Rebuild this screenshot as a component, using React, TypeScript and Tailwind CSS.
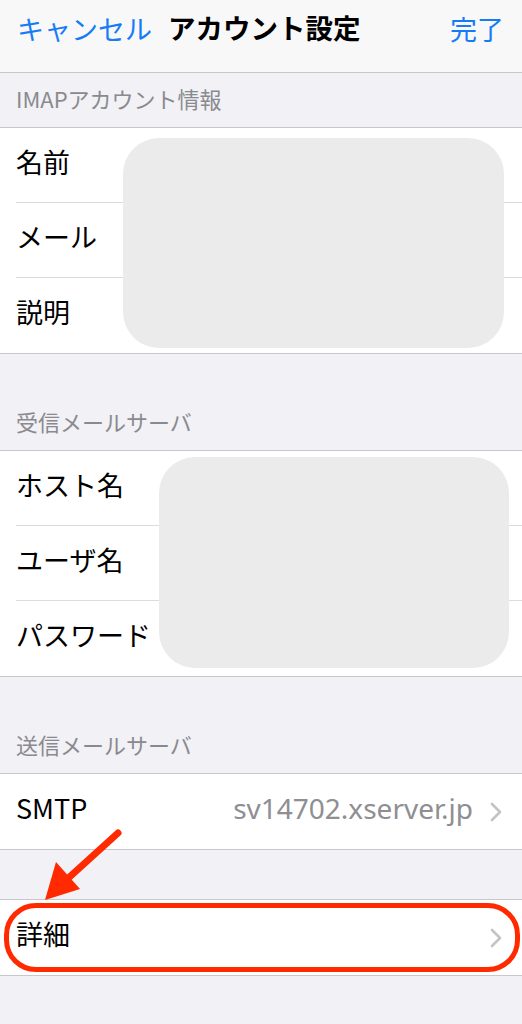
import React from "react";

const font = { fontFamily: '"Noto Sans CJK JP", "Noto Sans", sans-serif' };

function Chevron() {
  return (
    <svg width="12" height="20" viewBox="0 0 12 20" className="shrink-0">
      <polyline points="2,2 10,10 2,18" fill="none" stroke="#c4c4c8" strokeWidth="2.6" strokeLinecap="round" strokeLinejoin="round" />
    </svg>
  );
}

function Row({ label, last, children }: { label: string; last?: boolean; children?: React.ReactNode }) {
  return (
    <div className="h-[75px] pl-4 flex">
      <div className={"flex-1 flex items-center pr-5 " + (last ? "" : "border-b border-[#dcdcde]")}>
        <span className="text-[27px] text-black leading-none mb-[8px]">{label}</span>
        <div className="flex-1" />
        {children}
      </div>
    </div>
  );
}

function Header({ text, tall }: { text: string; tall?: boolean }) {
  return (
    <div className={(tall ? "h-[96px]" : "h-[54px]") + " flex items-end pb-[14px] px-4"}>
      <span className="text-[22px] leading-[30px] text-[#8a8a8e]">{text}</span>
    </div>
  );
}

export default function App() {
  return (
    <div className="relative w-[522px] min-h-[1024px] bg-[#f1f1f6] overflow-hidden" style={font}>
      {/* Nav bar */}
      <div className="h-[73px] bg-[#f8f8f8] border-b border-[#c8c7cc] flex items-center px-[17px] pb-[16px]">
        <span className="text-[27px] text-[#167cf6] leading-none">キャンセル</span>
        <span className="ml-[16px] text-[27.5px] font-bold text-black leading-none">アカウント設定</span>
        <div className="flex-1" />
        <span className="text-[27px] text-[#167cf6] leading-none mr-[1px]">完了</span>
      </div>

      <Header text="IMAPアカウント情報" />
      <div className="relative bg-white border-y border-[#c8c7cc]">
        <Row label="名前" />
        <Row label="メール" />
        <Row label="説明" last />
        <div className="absolute left-[123px] top-[10px] w-[381px] h-[210px] rounded-[36px] bg-[#ebebeb]" />
      </div>

      <Header text="受信メールサーバ" tall />
      <div className="relative bg-white border-y border-[#c8c7cc]">
        <Row label="ホスト名" />
        <Row label="ユーザ名" />
        <Row label="パスワード" last />
        <div className="absolute left-[159px] top-[6px] w-[350px] h-[211px] rounded-[36px] bg-[#ebebeb]" />
      </div>

      <Header text="送信メールサーバ" tall />
      <div className="bg-white border-y border-[#c8c7cc]">
        <Row label="SMTP" last>
          <span className="text-[28px] text-[#8e8e93] leading-none mr-[17px] mb-[8px]" style={{ fontFamily: '"Noto Sans", sans-serif' }}>sv14702.xserver.jp</span>
          <Chevron />
        </Row>
      </div>

      <div className="h-[49px]" />
      <div className="bg-white border-y border-[#c8c7cc]">
        <Row label="詳細" last>
          <Chevron />
        </Row>
      </div>

      {/* Annotation: red rounded frame */}
      <div className="absolute left-[4px] top-[903px] w-[516px] h-[69px] rounded-[32px] border-[5px] border-[#ff2a00]" />
      {/* Annotation: arrow */}
      <svg className="absolute left-0 top-0" width="522" height="1024" viewBox="0 0 522 1024">
        <line x1="118" y1="833" x2="64" y2="882" stroke="#ff2a00" strokeWidth="7" strokeLinecap="round" />
        <polygon points="45,900 56,862 80,889" fill="#ff2a00" />
      </svg>
    </div>
  );
}
